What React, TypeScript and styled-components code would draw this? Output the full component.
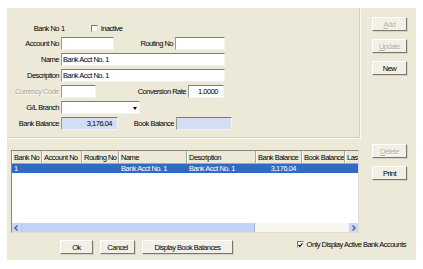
import React from "react";
import styled, { createGlobalStyle } from "styled-components";

const GlobalStyle = createGlobalStyle`
  body {
    margin: 0;
    background: #ffffff;
    font-family: "Liberation Sans", Arial, sans-serif;
    font-size: 7.5px;
    color: #000;
  }
`;

interface Column {
  title: string;
  width: number;
  right?: boolean;
}

const columns: Column[] = [
  { title: "Bank No", width: 30 },
  { title: "Account No", width: 40 },
  { title: "Routing No", width: 37 },
  { title: "Name", width: 68 },
  { title: "Description", width: 69 },
  { title: "Bank Balance", width: 46, right: true },
  { title: "Book Balance", width: 43, right: true },
  { title: "Last Reconciled", width: 60 },
];

const rows: string[][] = [
  ["1", "", "", "Bank Acct No. 1", "Bank Acct No. 1", "3,176.04", "", ""],
];

const gridTemplate = columns.map((c) => `${c.width}px`).join(" ");

const CheckMark = () => (
  <svg width="6" height="6" viewBox="0 0 6 6">
    <polyline points="0.6,2.8 2.2,4.6 5.4,1" fill="none" stroke="#000" strokeWidth="1.3" />
  </svg>
);

const App = () => {
  return (
    <>
      <GlobalStyle />
      <Window>
        <FormPanel>
          <Row>
            <Label>Bank No</Label>
            <Value>1</Value>
            <CheckWrap style={{ marginLeft: 26 }}>
              <Check />
              <span>Inactive</span>
            </CheckWrap>
          </Row>
          <Row>
            <Label>Account No</Label>
            <Field $w={53} />
            <Label $w={60}>Routing No</Label>
            <Field $w={50} />
          </Row>
          <Row>
            <Label>Name</Label>
            <Field $w={164}>Bank Acct No. 1</Field>
          </Row>
          <Row>
            <Label>Description</Label>
            <Field $w={164}>Bank Acct No. 1</Field>
          </Row>
          <Row>
            <Label $disabled>Currency Code</Label>
            <Field $w={35} style={{ marginLeft: 1 }} />
            <Label $w={91}>Conversion Rate</Label>
            <Field $w={36} $right>
              1.0000
            </Field>
          </Row>
          <Row>
            <Label>G/L Branch</Label>
            <Field $w={79}>
              <Arrow>
                <Triangle />
              </Arrow>
            </Field>
          </Row>
          <Row>
            <Label>Bank Balance</Label>
            <Field $w={57} $right $blue>
              3,176.04
            </Field>
            <Label $w={57}>Book Balance</Label>
            <Field $w={56} $blue />
          </Row>
        </FormPanel>

        <SideButtons>
          <Button $disabled>
            <ButtonText $accel>Add</ButtonText>
          </Button>
          <Button $disabled>
            <ButtonText $accel>Update</ButtonText>
          </Button>
          <Button>
            <ButtonText>New</ButtonText>
          </Button>
        </SideButtons>

        <GridArea>
          <Grid>
            <HeaderRow>
              {columns.map((c) => (
                <HeaderCell key={c.title}>{c.title}</HeaderCell>
              ))}
            </HeaderRow>
            <Body>
              {rows.map((r, i) => (
                <DataRow key={i} $selected={i === 0}>
                  {r.map((v, j) => (
                    <Cell key={j} $right={columns[j].right}>
                      {v}
                    </Cell>
                  ))}
                </DataRow>
              ))}
            </Body>
            <ScrollBar>
              <ScrollButton>
                <svg width="5" height="6" viewBox="0 0 5 6">
                  <polyline points="3.5,0.5 1,3 3.5,5.5" fill="none" stroke="#4d6185" strokeWidth="1.4" />
                </svg>
              </ScrollButton>
              <Thumb />
              <Track />
              <ScrollButton>
                <svg width="5" height="6" viewBox="0 0 5 6">
                  <polyline points="1.5,0.5 4,3 1.5,5.5" fill="none" stroke="#4d6185" strokeWidth="1.4" />
                </svg>
              </ScrollButton>
            </ScrollBar>
          </Grid>
        </GridArea>

        <SideButtons $lower>
          <Button $disabled>
            <ButtonText $accel>Delete</ButtonText>
          </Button>
          <Button>
            <ButtonText>Print</ButtonText>
          </Button>
        </SideButtons>

        <BottomBar>
          <Button $w={33}>
            <ButtonText>Ok</ButtonText>
          </Button>
          <Button $w={35}>
            <ButtonText>Cancel</ButtonText>
          </Button>
          <Button $w={91}>
            <ButtonText>Display Book Balances</ButtonText>
          </Button>
          <CheckWrap style={{ marginLeft: "auto" }}>
            <Check>
              <CheckMark />
            </Check>
            <span>Only Display Active Bank Accounts</span>
          </CheckWrap>
        </BottomBar>
      </Window>
    </>
  );
};

const Window = styled.div`
  margin: 8px 0 0 7px;
  width: 409px;
  height: 252px;
  background: #ece9d8;
  display: grid;
  grid-template-columns: 353px 1fr;
  grid-template-rows: 130px 98px 1fr;
  letter-spacing: -0.5px;
`;

const FormPanel = styled.div`
  border-right: 1px solid #d3cfbf;
  border-bottom: 1px solid #d3cfbf;
  box-shadow: 1px 1px 0 #fbfaf5;
  padding-top: 14px;
  display: flex;
  flex-direction: column;
  gap: 3px;
`;

const Row = styled.div`
  display: flex;
  align-items: center;
  height: 13px;

  &:first-child {
    height: 12px;
  }
`;

const Label = styled.span<{ $w?: number; $disabled?: boolean }>`
  width: ${(p) => p.$w ?? 53}px;
  padding-right: 1px;
  box-sizing: border-box;
  text-align: right;
  white-space: nowrap;
  color: ${(p) => (p.$disabled ? "#aca899" : "#000")};
  text-shadow: ${(p) => (p.$disabled ? "1px 1px 0 #fff" : "none")};
`;

const Value = styled.span`
  padding-left: 1px;
`;

const Field = styled.div<{ $w: number; $right?: boolean; $blue?: boolean }>`
  position: relative;
  width: ${(p) => p.$w}px;
  height: 13px;
  box-sizing: border-box;
  margin-left: 1px;
  background: ${(p) => (p.$blue ? "#d3def4" : "#ffffff")};
  border-top: 1px solid #7d7b70;
  border-left: 1px solid #9c9a8e;
  border-right: 1px solid #f4f3ee;
  border-bottom: 1px solid #f4f3ee;
  display: flex;
  align-items: center;
  justify-content: ${(p) => (p.$right ? "flex-end" : "flex-start")};
  padding: 0 ${(p) => (p.$right ? 5 : 1)}px 0 1px;
  white-space: nowrap;
  overflow: hidden;
`;

const Arrow = styled.div`
  position: absolute;
  right: 0;
  top: 0;
  bottom: 0;
  width: 9px;
  display: flex;
  align-items: center;
  justify-content: center;
`;

const Triangle = styled.div`
  width: 0;
  height: 0;
  border-left: 2.5px solid transparent;
  border-right: 2.5px solid transparent;
  border-top: 3px solid #000;
  margin-top: 2px;
`;

const CheckWrap = styled.label`
  display: flex;
  align-items: center;
  gap: 3px;
  white-space: nowrap;
`;

const Check = styled.span`
  width: 7px;
  height: 7px;
  box-sizing: border-box;
  background: #fff;
  border-top: 1px solid #7d7b70;
  border-left: 1px solid #7d7b70;
  border-right: 1px solid #e6e4da;
  border-bottom: 1px solid #e6e4da;
  display: flex;
  align-items: center;
  justify-content: center;
`;

const SideButtons = styled.div<{ $lower?: boolean }>`
  display: flex;
  flex-direction: column;
  gap: 8px;
  padding: ${(p) => (p.$lower ? "6px" : "9px")} 0 0 12px;
`;

const Button = styled.div<{ $w?: number; $disabled?: boolean }>`
  width: ${(p) => p.$w ?? 35}px;
  height: 14px;
  box-sizing: border-box;
  background: #f1efe6;
  border-top: 1px solid #ffffff;
  border-left: 1px solid #ffffff;
  border-right: 1px solid #7a786c;
  border-bottom: 1px solid #7a786c;
  box-shadow: 1px 1px 0 #d6d3c4;
  display: flex;
  align-items: center;
  justify-content: center;
  white-space: nowrap;
  color: ${(p) => (p.$disabled ? "#b3b0a2" : "#000")};
  text-shadow: ${(p) => (p.$disabled ? "1px 1px 0 #fff" : "none")};
`;

const ButtonText = styled.span<{ $accel?: boolean }>`
  display: block;

  &::first-letter {
    text-decoration: ${(p) => (p.$accel ? "underline" : "none")};
  }
`;

const GridArea = styled.div`
  padding: 12px 1px 3px 4px;
`;

const Grid = styled.div`
  height: 100%;
  box-sizing: border-box;
  background: #fff;
  border-top: 1px solid #8a887c;
  border-left: 1px solid #8a887c;
  border-right: 1px solid #e0ddd0;
  border-bottom: 1px solid #e0ddd0;
  display: flex;
  flex-direction: column;
  overflow: hidden;
`;

const HeaderRow = styled.div`
  display: grid;
  grid-template-columns: ${gridTemplate};
  height: 12px;
  flex-shrink: 0;
  background: #ece9d8;
  border-bottom: 1px solid #aca899;
`;

const HeaderCell = styled.div`
  border-right: 1px solid #aca899;
  box-shadow: inset 1px 0 0 #fff;
  padding-left: 2px;
  display: flex;
  align-items: center;
  white-space: nowrap;
  overflow: hidden;
`;

const Body = styled.div`
  flex: 1;
`;

const DataRow = styled.div<{ $selected?: boolean }>`
  display: grid;
  grid-template-columns: ${gridTemplate};
  height: 9px;
  background: ${(p) => (p.$selected ? "#316ac5" : "transparent")};
  color: ${(p) => (p.$selected ? "#fff" : "#000")};
`;

const Cell = styled.div<{ $right?: boolean }>`
  display: flex;
  align-items: center;
  justify-content: ${(p) => (p.$right ? "flex-end" : "flex-start")};
  padding: 0 ${(p) => (p.$right ? 6 : 1)}px 0 2px;
  white-space: nowrap;
  overflow: hidden;
`;

const ScrollBar = styled.div`
  height: 9px;
  flex-shrink: 0;
  display: flex;
  background: #f7f6f1;
`;

const ScrollButton = styled.div`
  width: 9px;
  background: #c8d7f7;
  border-radius: 1px;
  display: flex;
  align-items: center;
  justify-content: center;
`;

const Thumb = styled.div`
  width: 232px;
  background: #c3d3f8;
  border-left: 1px solid #b1c4ef;
  border-right: 1px solid #9fb5e8;
`;

const Track = styled.div`
  flex: 1;
`;

const BottomBar = styled.div`
  grid-column: 1 / span 2;
  display: flex;
  align-items: flex-start;
  gap: 7px;
  padding: 4px 10px 0 53px;
`;

export default App;
